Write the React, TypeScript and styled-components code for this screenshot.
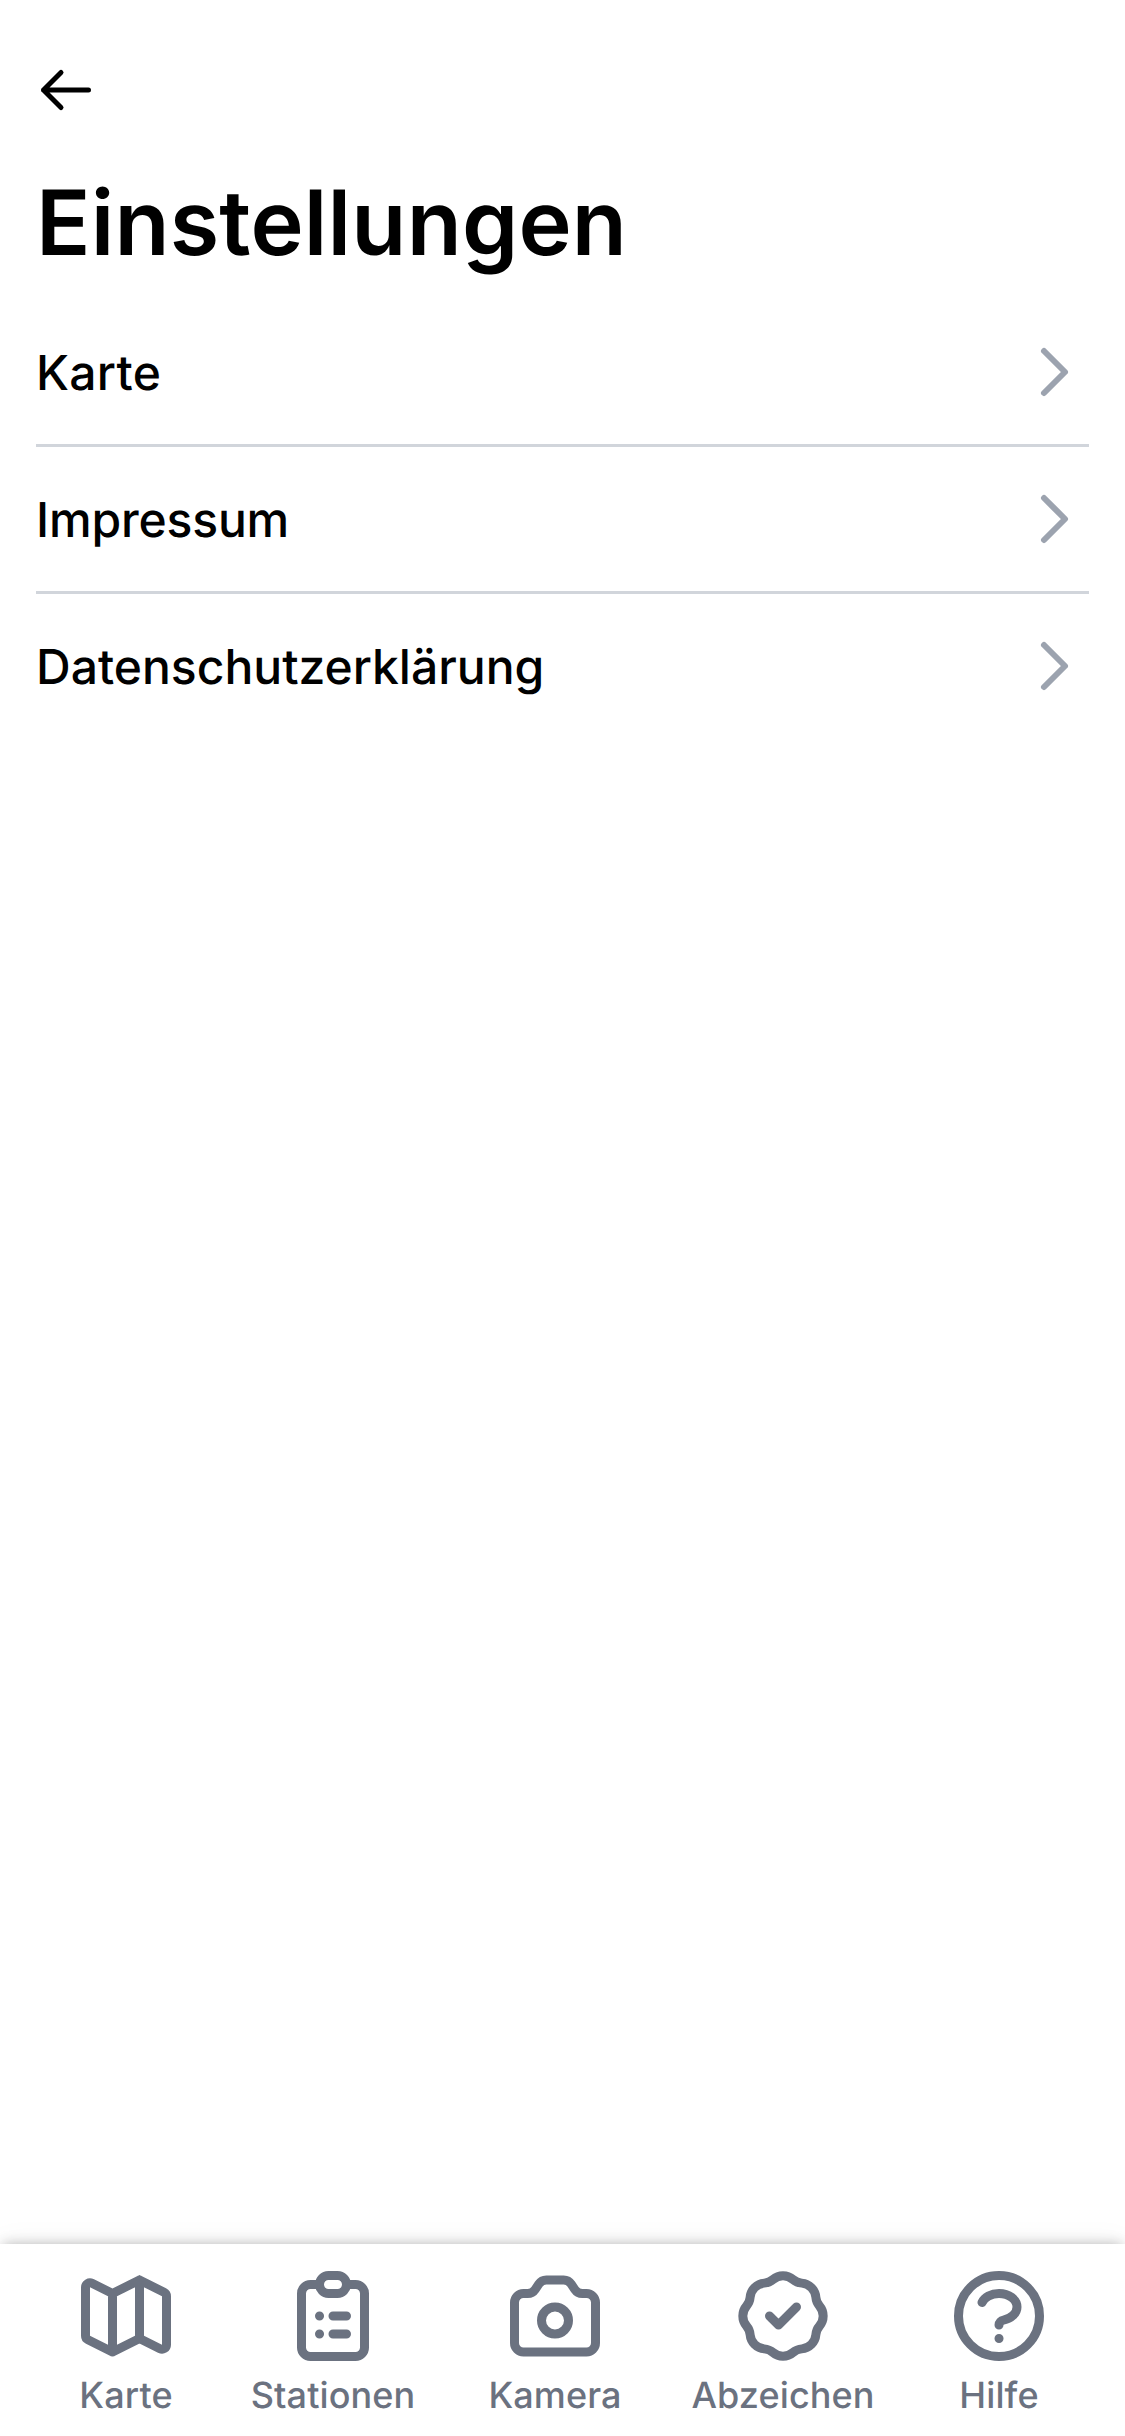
import React from "react";
import styled, { createGlobalStyle } from "styled-components";
import {
  HiOutlineArrowLeft,
  HiOutlineBadgeCheck,
  HiOutlineCamera,
  HiOutlineChevronRight,
  HiOutlineClipboardList,
  HiOutlineMap,
  HiOutlineQuestionMarkCircle,
} from "react-icons/hi";

const GlobalStyle = createGlobalStyle`
  *, *::before, *::after { box-sizing: border-box; }
  body {
    margin: 0;
    background: #ffffff;
    color: #000000;
    font-family: Inter, "Liberation Sans", sans-serif;
    text-rendering: geometricPrecision;
  }
`;

const Screen = styled.div`
  display: flex;
  flex-direction: column;
  height: 2436px;
  overflow: hidden;
`;

const Content = styled.main`
  flex: 1;
  padding: 60px 36px 0;
`;

const BackButton = styled.button`
  display: block;
  padding: 0;
  border: 0;
  background: none;
  color: inherit;
  font-size: 60px;
  line-height: 0;
`;

const Title = styled.h1`
  margin: 49px 0 23px;
  font-size: 90px;
  line-height: 108px;
  font-weight: 600;
  letter-spacing: 0.2px;
`;

const List = styled.ul`
  margin: 0;
  padding: 0;
  list-style: none;
`;

const Row = styled.li`
  display: flex;
  align-items: center;
  justify-content: space-between;
  height: 144px;
  font-size: 48px;
  line-height: 72px;
  font-weight: 500;

  & + & {
    height: 147px;
    border-top: 3px solid #d1d5db;
  }
`;

const RowLabel = styled.span<{ $tracking: number }>`
  padding-top: 2px;
  letter-spacing: ${({ $tracking }) => $tracking}px;
`;

const RowChevron = styled(HiOutlineChevronRight)`
  width: 72px;
  height: 72px;
  color: #9ca3af;
`;

const TabBar = styled.nav`
  display: grid;
  grid-template-columns: 206px 208px 236px 220px 212px;
  justify-items: center;
  height: 192px;
  padding: 18px 20px 15px 23px;
  background: #ffffff;
  box-shadow:
    0 -3px 12px -3px rgba(0, 0, 0, 0.25),
    0 0 30px rgba(0, 0, 0, 0.05);
`;

const Tab = styled.a`
  display: flex;
  flex-direction: column;
  align-items: center;
  color: #6b7280;
  font-size: 36px;
  line-height: 51px;
  font-weight: 500;
  letter-spacing: 0.1px;

  svg {
    flex-shrink: 0;
    width: 108px;
    height: 108px;
  }
`;

const settings = [
  { label: "Karte", tracking: 0.3 },
  { label: "Impressum", tracking: -0.15 },
  { label: "Datenschutzerklärung", tracking: 0 },
];

const tabs = [
  { label: "Karte", Icon: HiOutlineMap },
  { label: "Stationen", Icon: HiOutlineClipboardList },
  { label: "Kamera", Icon: HiOutlineCamera },
  { label: "Abzeichen", Icon: HiOutlineBadgeCheck },
  { label: "Hilfe", Icon: HiOutlineQuestionMarkCircle },
];

export default function App() {
  return (
    <Screen>
      <GlobalStyle />
      <Content>
        <BackButton aria-label="Zurück">
          <HiOutlineArrowLeft />
        </BackButton>
        <Title>Einstellungen</Title>
        <List>
          {settings.map(({ label, tracking }) => (
            <Row key={label}>
              <RowLabel $tracking={tracking}>{label}</RowLabel>
              <RowChevron />
            </Row>
          ))}
        </List>
      </Content>
      <TabBar>
        {tabs.map(({ label, Icon }) => (
          <Tab key={label}>
            <Icon />
            <span>{label}</span>
          </Tab>
        ))}
      </TabBar>
    </Screen>
  );
}
